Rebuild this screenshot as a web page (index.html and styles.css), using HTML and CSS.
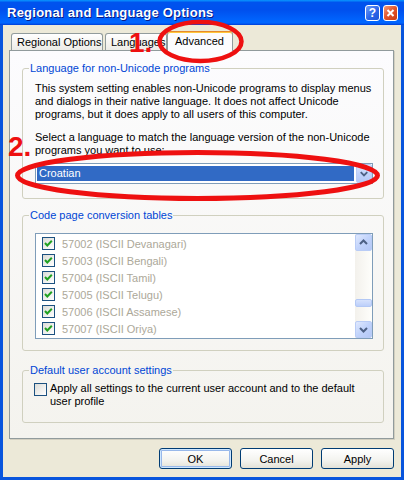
FILE: index.html
```html
<!DOCTYPE html>
<html>
<head>
<meta charset="utf-8">
<link rel="stylesheet" href="styles.css">
</head>
<body>
<div class="window">
  <div class="titlebar">
    <span class="title">Regional and Language Options</span>
    <div class="tbtns">
      <span class="tbtn help">?</span>
      <span class="tbtn close"><svg width="13" height="14" viewBox="0 0 13 14"><path d="M3.5 4 L9.5 10 M9.5 4 L3.5 10" stroke="#fff" stroke-width="2" fill="none"/></svg></span>
    </div>
  </div>
  <div class="body">
    <div class="tabs">
      <div class="tab t1">Regional Options</div>
      <div class="tab t2">Languages</div>
      <div class="tab t3 active">Advanced</div>
    </div>
    <div class="panel">
      <fieldset class="group g1">
        <legend>Language for non-Unicode programs</legend>
        <div class="gbody">
          <p class="txt">This system setting enables non-Unicode programs to display menus<br>and dialogs in their native language. It does not affect Unicode<br>programs, but it does apply to all users of this computer.</p>
          <p class="txt second">Select a language to match the language version of the non-Unicode<br>programs you want to use:</p>
          <div class="combo">
            <span class="sel">Croatian</span>
            <span class="drop"><svg width="15" height="17" viewBox="0 0 15 17"><polyline points="4,7 7.5,10.5 11,7" fill="none" stroke="#4D6185" stroke-width="2"/></svg></span>
          </div>
        </div>
      </fieldset>
      <fieldset class="group g2">
        <legend>Code page conversion tables</legend>
        <div class="gbody">
          <div class="listbox">
            <ul class="items">
              <li><span class="chk"><svg width="11" height="11" viewBox="0 0 11 11"><polyline points="2,5 4.3,7.5 8.8,2.8" fill="none" stroke="#21A121" stroke-width="2"/></svg></span>57002 (ISCII Devanagari)</li>
              <li><span class="chk"><svg width="11" height="11" viewBox="0 0 11 11"><polyline points="2,5 4.3,7.5 8.8,2.8" fill="none" stroke="#21A121" stroke-width="2"/></svg></span>57003 (ISCII Bengali)</li>
              <li><span class="chk"><svg width="11" height="11" viewBox="0 0 11 11"><polyline points="2,5 4.3,7.5 8.8,2.8" fill="none" stroke="#21A121" stroke-width="2"/></svg></span>57004 (ISCII Tamil)</li>
              <li><span class="chk"><svg width="11" height="11" viewBox="0 0 11 11"><polyline points="2,5 4.3,7.5 8.8,2.8" fill="none" stroke="#21A121" stroke-width="2"/></svg></span>57005 (ISCII Telugu)</li>
              <li><span class="chk"><svg width="11" height="11" viewBox="0 0 11 11"><polyline points="2,5 4.3,7.5 8.8,2.8" fill="none" stroke="#21A121" stroke-width="2"/></svg></span>57006 (ISCII Assamese)</li>
              <li><span class="chk"><svg width="11" height="11" viewBox="0 0 11 11"><polyline points="2,5 4.3,7.5 8.8,2.8" fill="none" stroke="#21A121" stroke-width="2"/></svg></span>57007 (ISCII Oriya)</li>
            </ul>
            <div class="scrollbar">
              <span class="sbtn"><svg width="15" height="15" viewBox="0 0 15 15"><polyline points="4,9 7.5,5.5 11,9" fill="none" stroke="#4D6185" stroke-width="2"/></svg></span>
              <span class="track"><span class="thumb"></span></span>
              <span class="sbtn"><svg width="15" height="15" viewBox="0 0 15 15"><polyline points="4,6 7.5,9.5 11,6" fill="none" stroke="#4D6185" stroke-width="2"/></svg></span>
            </div>
          </div>
        </div>
      </fieldset>
      <fieldset class="group g3">
        <legend>Default user account settings</legend>
        <div class="gbody">
          <div class="chkrow">
            <span class="chk empty"></span>
            <span class="txt">Apply all settings to the current user account and to the default<br>user profile</span>
          </div>
        </div>
      </fieldset>
    </div>
    <div class="buttons">
      <span class="btn default">OK</span>
      <span class="btn">Cancel</span>
      <span class="btn">Apply</span>
    </div>
  </div>
  <svg class="marks" width="404" height="480" viewBox="0 0 404 480">
    <ellipse cx="200.5" cy="41.5" rx="41" ry="19.5" fill="none" stroke="#EE1010" stroke-width="4.5"/>
    <ellipse cx="197.5" cy="175.5" rx="180" ry="23" fill="none" stroke="#EE1010" stroke-width="5"/>
  </svg>
  <span class="num n1">1.</span>
  <span class="num n2">2.</span>
</div>
</body>
</html>
```
FILE: styles.css
```css
* { box-sizing: border-box; }
html, body { margin: 0; padding: 0; }
body {
  font-family: "Liberation Sans", Arial, sans-serif;
  font-size: 11px;
  color: #000;
  background: #fff;
}
.window {
  position: relative;
  width: 404px;
  height: 480px;
  display: flex;
  flex-direction: column;
}
.titlebar {
  height: 25px;
  flex: none;
  display: flex;
  align-items: center;
  justify-content: space-between;
  padding: 0 6px 0 7px;
  background: linear-gradient(to bottom, #0997FF 0%, #0053EE 10%, #0050EE 40%, #0066FF 86%, #0066FF 92%, #0050E8 96%, #003DD7 100%);
}
.title {
  color: #fff;
  font-weight: bold;
  font-size: 13px;
  letter-spacing: 0.25px;
  text-shadow: 1px 1px 0 #0A1883;
}
.tbtns { display: flex; gap: 3px; align-items: center; }
.tbtn {
  width: 15px;
  height: 16px;
  border: 1px solid #fff;
  border-radius: 3px;
  display: flex;
  align-items: center;
  justify-content: center;
  color: #fff;
  font-weight: bold;
  font-size: 12px;
}
.help { background: linear-gradient(135deg, #6F9CF9 0%, #2C66E8 55%, #1E55D8 100%); }
.close { background: linear-gradient(135deg, #F09A7A 0%, #E2542A 50%, #C73C14 100%); }
.body {
  flex: 1;
  background: #ECE9D8;
  border: 3px solid #0855DD;
  border-top: 0;
  padding: 6px 7px 0 6px;
  display: flex;
  flex-direction: column;
}
.tabs {
  height: 19px;
  display: flex;
  align-items: flex-end;
  padding-left: 2px;
  position: relative;
  z-index: 1;
}
.tab {
  height: 17px;
  border: 1px solid #919B9C;
  border-bottom: 0;
  border-radius: 3px 3px 0 0;
  background: linear-gradient(to bottom, #FFFFFF, #ECEBE6);
  padding: 1px 0 0 5px;
  line-height: 14px;
}
.t1 { width: 92px; margin-right: 2px; }
.t2 { width: 62px; }
.t3 { width: 66px; }
.tab.active {
  height: 20px;
  margin-bottom: -1px;
  background: #FCFCFE;
  border-top-color: #E68B2C;
  box-shadow: inset 0 1px 0 #FFC73C;
  padding: 2px 0 0 7px;
}
.panel {
  height: 389px;
  flex: none;
  border: 1px solid #919B9C;
  box-shadow: 1px 1px 0 #D2CFC0;
  background: linear-gradient(to bottom, #FCFCFE, #F4F3EE);
  padding: 11px 9px 0 12px;
}
.group {
  margin: 0;
  padding: 0;
  border: 1px solid #D0D0BF;
  border-radius: 3px;
  min-width: 0;
}
.group legend {
  margin-left: 6px;
  padding: 0 1px;
  color: #0046D5;
  line-height: 13px;
}
.gbody { padding: 7px 10px 14px 12px; }
.g2 { margin-top: 10px; }
.g2 .gbody { padding: 11px 10px 11px 12px; }
.g3 { margin-top: 13px; }
.g3 .gbody { padding: 5px 10px 14px 11px; }
.txt { margin: 0; line-height: 13px; }
.txt.second { margin-top: 10px; }
.combo {
  margin-top: 6px;
  height: 21px;
  border: 1px solid #7F9DB9;
  background: #fff;
  display: flex;
  align-items: stretch;
}
.sel {
  flex: 1;
  margin: 2px 2px 2px 1px;
  background: #316AC5;
  color: #fff;
  line-height: 15px;
  padding-left: 2px;
}
.drop {
  width: 16px;
  margin: 0;
  border: 1px solid #B9CCF6;
  border-radius: 2px;
  background: linear-gradient(to bottom, #DCE6FD, #C1D3FB 50%, #B4C8F6);
  display: flex;
  align-items: center;
  justify-content: center;
}
.listbox {
  height: 106px;
  border: 1px solid #7F9DB9;
  background: #fff;
  display: flex;
}
.items {
  list-style: none;
  margin: 0;
  padding: 1px 0 0 6px;
  flex: 1;
}
.items li {
  height: 17px;
  display: flex;
  align-items: center;
  gap: 7px;
  color: #ACA899;
}
.chk {
  width: 13px;
  height: 13px;
  flex: none;
  border: 1px solid #1C5180;
  background: linear-gradient(135deg, #DCDCD7, #FFFFFF);
  display: flex;
}
.scrollbar {
  width: 17px;
  display: flex;
  flex-direction: column;
  background: linear-gradient(to right, #F3F1EC, #FEFEFB);
}
.sbtn {
  height: 17px;
  flex: none;
  border: 1px solid #B9CCF6;
  border-radius: 2px;
  background: linear-gradient(135deg, #E0E9FE, #C1D3FB 50%, #B4C8F6);
  display: flex;
  align-items: center;
  justify-content: center;
}
.track { flex: 1; padding-top: 48px; }
.thumb {
  display: block;
  height: 8px;
  border: 1px solid #B3C8F5;
  border-radius: 2px;
  background: linear-gradient(to bottom, #D6E2FD, #BCCFFA);
}
.chkrow { display: flex; align-items: flex-start; gap: 3px; }
.chkrow .chk { margin-top: 1px; }
.chk.empty { border-color: #1C5180; }
.buttons {
  margin-top: 9px;
  display: flex;
  justify-content: flex-end;
  gap: 8px;
}
.btn {
  width: 73px;
  height: 21px;
  border: 1px solid #003C74;
  border-radius: 3px;
  background: linear-gradient(to bottom, #FFFFFF, #F3F3EF 60%, #E3E1D7);
  display: flex;
  align-items: center;
  justify-content: center;
}
.btn.default { box-shadow: inset 0 0 0 1px #CEE7FF, inset 0 0 0 2px #98B8EA; }
.marks { position: absolute; left: 0; top: 0; pointer-events: none; z-index: 5; }
.num {
  position: absolute;
  z-index: 6;
  color: #EE1010;
  font-weight: bold;
  font-size: 28px;
  line-height: 28px;
}
.n1 { left: 129px; top: 29px; }
.n2 { left: 8px; top: 133px; }
```
